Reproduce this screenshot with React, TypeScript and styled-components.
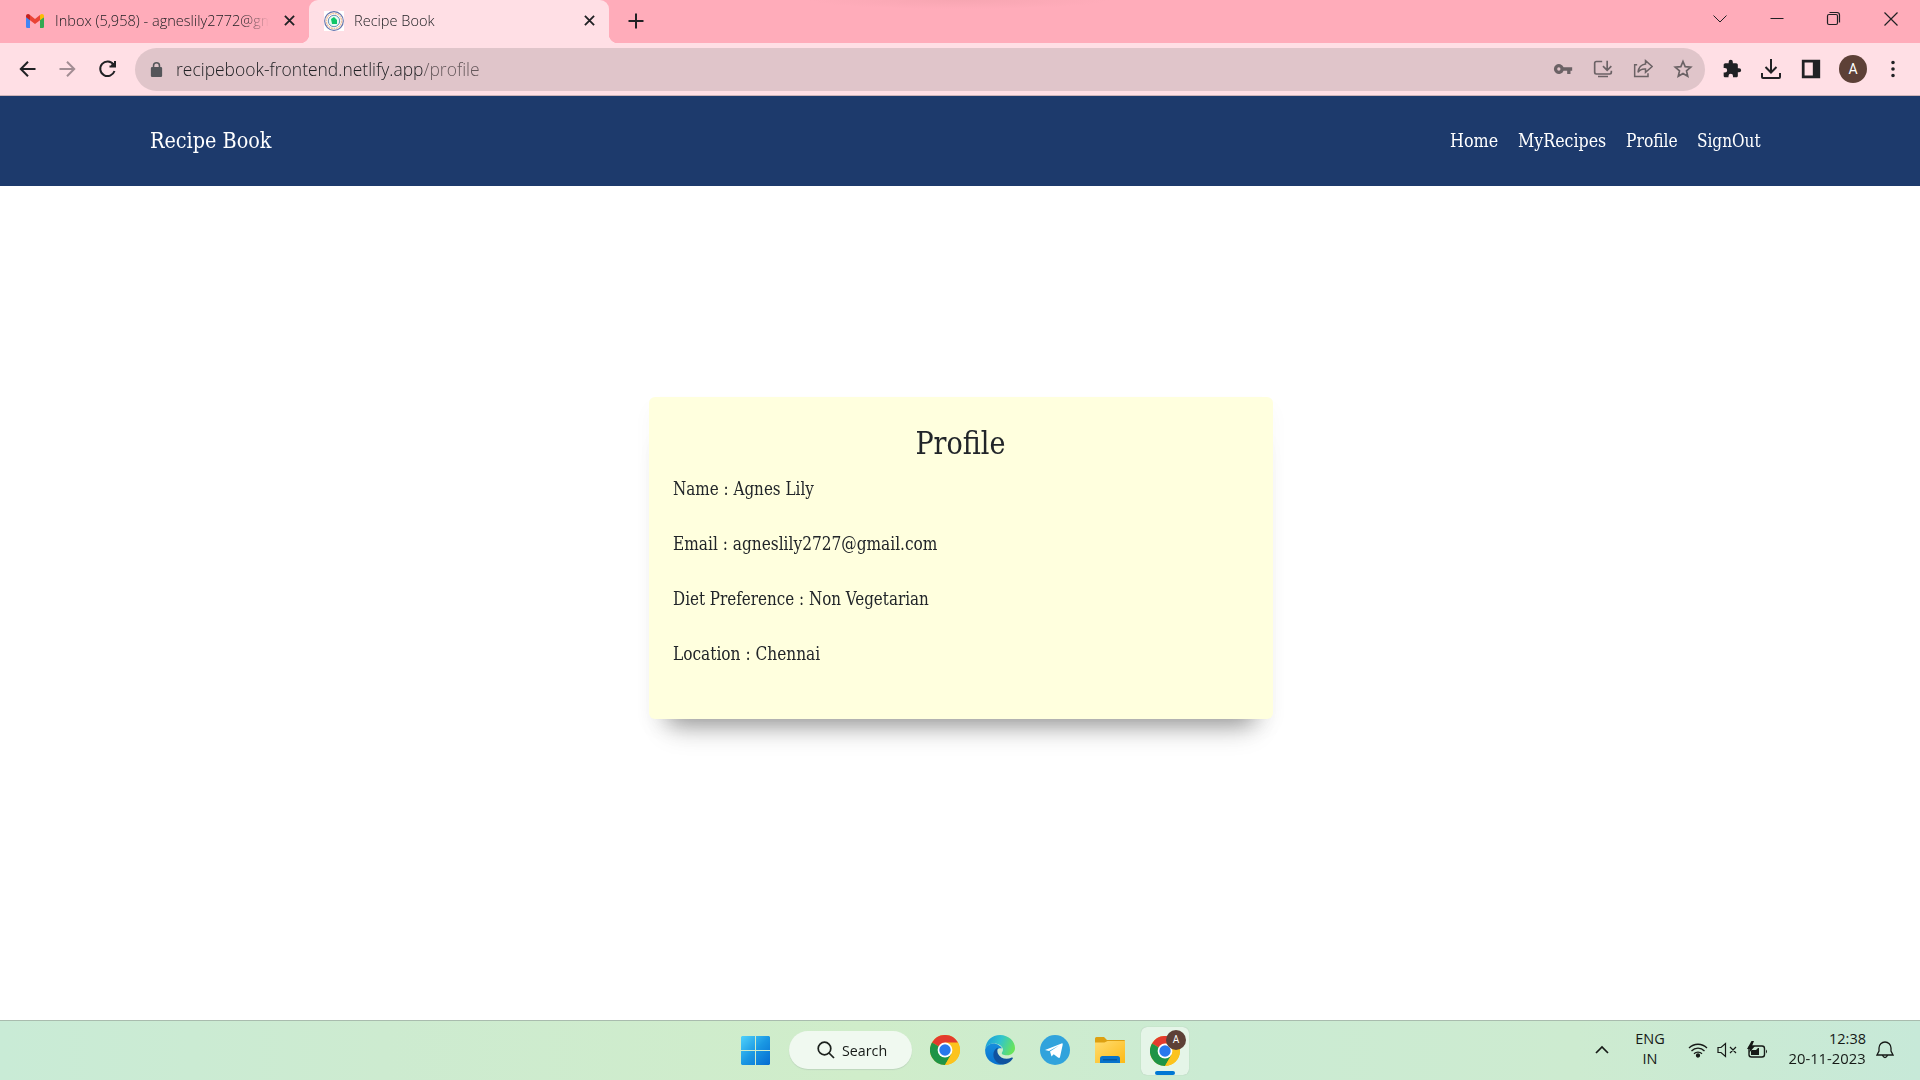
import React from "react";
import styled, { createGlobalStyle } from "styled-components";

const Global = createGlobalStyle`
  *{box-sizing:border-box}
  html,body{margin:0;padding:0;background:#fff;overflow:hidden}
  svg{display:block;flex:none}
`;
const ui = `"Open Sans","Noto Sans",sans-serif`;
const serif = `"DejaVu Serif Condensed","DejaVu Serif",serif`;

const Screen = styled.div`
  width:1920px;height:1080px;display:flex;flex-direction:column;font-family:${ui};overflow:hidden;
`;

const Squeeze = styled.span<{ $k: number; $from?: string }>`
  display:inline-block;white-space:nowrap;transform:scaleX(${p => p.$k});transform-origin:${p => p.$from || "left"} center;
`;

const TabStrip = styled.div`
  height:43px;background:radial-gradient(ellipse 150px 9px at 960px 0,#f7a6b2,#ffacba);display:flex;color:#202124;flex:none;
`;
const Tab = styled.div<{ $active?: boolean; $w: number; $pl: number }>`
  width:${p => p.$w}px;height:43px;padding:0 14px 2px ${p => p.$pl}px;display:flex;align-items:center;
  background:${p => p.$active ? "#ffdfe5" : "transparent"};border-radius:9px 9px 0 0;
  position:relative;
  &::before,&::after{content:"";display:${p => p.$active ? "block" : "none"};position:absolute;bottom:0;width:9px;height:9px}
  &::before{left:-9px;background:radial-gradient(circle at 0 0,transparent 9px,#ffdfe5 9.5px)}
  &::after{right:-9px;background:radial-gradient(circle at 100% 0,transparent 9px,#ffdfe5 9.5px)}
`;
const TabTitle = styled.div<{ $fade?: boolean; $ml: number }>`
  margin-left:${p => p.$ml}px;flex:1;overflow:hidden;white-space:nowrap;font-size:15px;line-height:22px;padding-bottom:2px;font-weight:300;
  mask-image:${p => p.$fade ? "linear-gradient(90deg,#000 188px,transparent 214px)" : "none"};
`;
const WindowControls = styled.div`
  margin-left:auto;display:flex;align-items:flex-start;padding:9px 19px 0 0;gap:37px;
`;
const NewTab = styled.div`padding:12px 0 0 18px;`;

const Toolbar = styled.div`
  height:53px;background:#ffdfe5;border-bottom:1px solid #cdb4b9;display:flex;align-items:center;padding:0 17px;flex:none;
`;
const NavButtons = styled.div`display:flex;gap:20px;width:118px;`;
const AddressBar = styled.div`
  width:1570px;height:43px;border-radius:22px;background:#e0c5ca;display:flex;align-items:center;padding:0 12px 0 14px;
`;
const Url = styled.div`
  margin-left:12px;flex:1;font-size:18px;line-height:26px;color:#202124;font-weight:300;
  em{font-style:normal;color:#66595c}
`;
const BarIcons = styled.div`display:flex;gap:20px;`;
const Extensions = styled.div`display:flex;align-items:center;gap:17px;margin-left:17px;`;
const Avatar = styled.div<{ $s: number }>`
  width:${p => p.$s}px;height:${p => p.$s}px;border-radius:50%;background:#5d4037;color:#fff;
  display:flex;align-items:center;justify-content:center;font:${p => p.$s / 2}px Roboto,sans-serif;
`;

const Header = styled.header`
  height:90px;background:#1d3a6c;color:#fff;display:flex;align-items:center;padding:0 159px 0 150px;flex:none;font-family:${serif};
`;
const Brand = styled.div`width:180px;font-size:22.5px;line-height:30px;padding-bottom:2px;`;
const Menu = styled.nav`margin-left:auto;display:flex;gap:19px;font-size:18px;line-height:26px;`;
const MenuItem = styled.a<{ $w: number }>`width:${p => p.$w}px;`;

const Page = styled.main`
  flex:1;background:#fff;display:flex;justify-content:center;align-items:flex-start;padding:211px 0 0 1px;
`;
const Card = styled.section`
  width:624px;height:322px;border-radius:6px;background:#ffffde;color:#212529;padding:24px;font-family:${serif};
  box-shadow:rgba(0,0,0,.25) 0 25px 20px -20px,rgba(0,0,0,.2) 0 28px 28px -20px,rgba(0,0,0,.03) 0 10px 20px;
`;
const Title = styled.h2`margin:0 0 11px;text-align:center;font-weight:400;font-size:31px;line-height:44px;`;
const Field = styled.p`margin:0 0 29px;font-size:18px;line-height:26px;`;

const Taskbar = styled.footer`
  height:60px;border-top:1px solid #a9bcae;flex:none;display:grid;grid-template-columns:737px 1fr auto;color:#161a17;
  background:linear-gradient(90deg,#c9ebd6 0,#cdebd0 20%,#d0edca 45%,#cbebd3 63%,#cdebd0 82%,#c7e9d8 100%);
`;
const Apps = styled.div`grid-column:2;display:flex;align-items:center;padding-left:4px;`;
const SearchBox = styled.div`
  width:123px;height:38px;border-radius:19px;background:#f0f9f0;box-shadow:0 1px 1px #bdd6bd;margin:0 18px 1px 19px;
  display:flex;align-items:center;padding-left:28px;gap:7px;font-size:15px;
`;
const AppIcon = styled.div`margin:0 25px 1px 0;`;
const ActiveApp = styled.div`
  width:48px;height:48px;margin-left:-9px;border-radius:6px;background:#e5f5e8;box-shadow:0 0 1px #9eb7a5;position:relative;
  padding:9px;
  &::after{content:"";position:absolute;left:14px;bottom:0;width:20px;height:4px;border-radius:2px;background:#0078d4}
`;
const Badge = styled.div`position:absolute;left:25px;top:3px;`;
const Tray = styled.div`display:flex;align-items:center;padding:0 26px 2px 0;font-size:14.5px;line-height:20px;`;
const Language = styled.div`width:30px;margin:0 23px 0 26px;text-align:center;padding-bottom:1px;`;
const Status = styled.div`display:flex;align-items:center;gap:9px;`;
const Clock = styled.div`width:80px;margin:0 10px 0 18px;display:flex;flex-direction:column;align-items:flex-end;white-space:nowrap;padding-bottom:1px;`;

const Close = ({ s = 11, w = 2 }: { s?: number; w?: number }) => (
  <svg width={s} height={s} viewBox="0 0 12 12"><path d="M1 1l10 10M11 1L1 11" stroke="#202124" strokeWidth={w} /></svg>
);
const Gmail = () => (
  <svg width="18" height="14" viewBox="0 0 18 14"><path d="M0 3v9.5Q0 14 1.3 14H4V5z" fill="#4285f4" /><path d="M14 5v9h2.7Q18 14 18 12.5V3z" fill="#34a853" /><path d="M4 1l5 4 5-4v5.2L9 10 4 6.2z" fill="#ea4335" /><path d="M0 2.3C0 .2 2.3-.7 4 1v5.2L0 3.2z" fill="#c5221f" /><path d="M14 1c1.700-1.700 4-.8 4 1.300v.9l-4 3z" fill="#fbbc04" /></svg>
);
const SiteIcon = () => (
  <svg width="20" height="20" viewBox="0 0 20 20"><path fill="#fff" d="M0 0h20v20H0z" /><circle cx="10" cy="10" r="9.300" fill="#fff" stroke="#6573ad" strokeWidth="1.200" /><circle cx="10" cy="10" r="7.600" fill="none" stroke="#f2c6a3" strokeWidth="1.500" strokeDasharray="2 .6" /><circle cx="10" cy="10" r="5.700" fill="#e9fbf2" stroke="#6b91b8" strokeWidth="1" /><path d="M7 8l3-2 3 3v4H8z" fill="#12c668" /></svg>
);
const Chrome = () => (
  <svg width="30" height="30" viewBox="0 0 30 30"><circle cx="15" cy="15" r="15" fill="#fbbc04" /><path d="M15 15L2 7.500A15 15 0 0 1 28 7.500z" fill="#e33b2e" /><path d="M2 7.500A15 15 0 0 0 15 30l6.500-11.250L15 15z" fill="#1e9446" /><path d="M15 7.500h13l.4 1A15 15 0 0 1 15 30l6.500-11.250z" fill="#fcc31d" /><circle cx="15" cy="15" r="7.400" fill="#fff" /><circle cx="15" cy="15" r="5.700" fill="#2878ed" /></svg>
);
const Edge = () => (
  <svg width="30" height="30" viewBox="0 0 30 30">
    <defs><linearGradient id="ea" x1="0" x2="1" y1=".2" y2=".5"><stop stopColor="#189bdc" /><stop offset=".5" stopColor="#32c5cb" /><stop offset="1" stopColor="#68e45a" /></linearGradient><linearGradient id="eb" x1="0" x2="0" y1="0" y2="1"><stop stopColor="#168ddd" /><stop offset="1" stopColor="#0872cf" /></linearGradient></defs>
    <path d="M.2 14C1 5.500 7 0 15 0c9 0 15 6.600 15 13 0 4.600-3.800 7.300-8 7.300-4 0-6-1.400-5-2.800 1.700-2 1.300-5-1.500-7C10 6.800 2.500 8.500.2 14z" fill="url(#ea)" />
    <path d="M.2 14C2.500 8.500 9 7 13.500 10c2 1.200 3.200 2.500 3.500 3.500-7-1.500-9 8-3 12.500 2 2 5 2.800 7 2.500C12 32.500-1 26.500.2 14z" fill="url(#eb)" />
    <path d="M13 12.400c-6.500 3-6.200 12.200.8 16.100 5 2.200 11-.2 14-5.100.3-.7-.3-1.200-1-.8-5.500 2.700-11.800.7-13.800-3.800-1-2.300-.7-4.600 0-6.400z" fill="#10539f" />
  </svg>
);
const Telegram = () => (
  <svg width="30" height="30" viewBox="0 0 30 30"><circle cx="15" cy="15" r="15" fill="#31a3dc" /><path d="M5 15L21.500 8.400q1.500-.4 1.200 1.300L20 22c-.3 1-1 1.200-2 .5l-4.300-3.200-2.200 2.200-1.500-5 9-6L9 16z" fill="#fff" /></svg>
);
const Folder = () => (
  <svg width="30" height="27" viewBox="0 0 30 27"><path d="M0 6V1.500Q0 0 1.500 0H9l3 3h17q1 0 1 1v4H0z" fill="#dda011" /><defs><linearGradient id="fd" x2="1" y2="1"><stop stopColor="#ffdc70" /><stop offset="1" stopColor="#fdba16" /></linearGradient></defs><path d="M0 5.500h9.500L12.500 4H30v22H0z" fill="url(#fd)" /><path d="M5 26v-4.500Q5 19 7.500 19h15q2.500 0 2.500 2.500V26z" fill="#0873cb" /><path d="M8 22.800h14" stroke="#054d8d" /></svg>
);
const Windows = () => (
  <svg width="29" height="29" viewBox="0 0 29 29"><defs><linearGradient id="wn" x2="1" y2="1"><stop stopColor="#50d2fb" /><stop offset=".5" stopColor="#1a98e3" /><stop offset="1" stopColor="#046bd0" /></linearGradient></defs><path d="M1 0h13v14H0V1zM15 0h13l1 1v13H15zM0 15h14v14H1l-1-1zM15 15h14v13l-1 1H15z" fill="url(#wn)" /></svg>
);
const Glyph = ({ d, s = 22, c = "#6b6265", fill, w = 2, vb = 24 }: { d: string; s?: number; c?: string; fill?: boolean; w?: number; vb?: number }) => (
  <svg width={s} height={s} viewBox={`0 0 ${vb} ${vb}`} fill={fill ? c : "none"} stroke={fill ? "none" : c} strokeWidth={w} fillRule="evenodd"><path d={d} /></svg>
);

const links: [string, number, number][] = [["Home", 49, 0.985], ["MyRecipes", 89, 0.98], ["Profile", 52, 0.96], ["SignOut", 64, 0.945]];
const fields: [string, number][] = [
  ["Name : Agnes Lily", 0.937],
  ["Email : agneslily2727@gmail.com", 0.95],
  ["Diet Preference : Non Vegetarian", 0.935],
  ["Location : Chennai", 0.95],
];

export default function App() {
  return (
    <Screen>
      <Global />
      <TabStrip>
        <Tab $w={309} $pl={26}>
          <Gmail />
          <TabTitle $ml={11} $fade><Squeeze $k={0.97}>Inbox (5,958) - agneslily2772@gm</Squeeze></TabTitle>
          <Close />
        </Tab>
        <Tab $active $w={300} $pl={15}>
          <SiteIcon />
          <TabTitle $ml={10}><Squeeze $k={0.97}>Recipe Book</Squeeze></TabTitle>
          <Close />
        </Tab>
        <NewTab><svg width="18" height="18" viewBox="0 0 18 18"><path d="M9 1.500v15M1.500 9h15" stroke="#202124" strokeWidth="2" /></svg></NewTab>
        <WindowControls>
          <Glyph s={20} vb={20} w={1} c="#202124" d="M3.500 6.500l6.500 6.500 6.500-6.500" />
          <Glyph s={20} vb={20} w={1} c="#202124" d="M3.500 9.500h13" />
          <Glyph s={20} vb={20} w={1.2} c="#202124" d="M6 5.500h6q1.500 0 1.500 1.500v7q0 1.500-1.500 1.500H5Q3.500 15.500 3.500 14V7Q3.500 5.500 5 5.500zM5.500 3.500H13q2.500 0 2.500 2.500v7.500" />
          <Glyph s={20} vb={20} w={1.2} c="#202124" d="M3.500 3.500l13 13M16.500 3.500l-13 13" />
        </WindowControls>
      </TabStrip>
      <Toolbar>
        <NavButtons>
          <Glyph s={20} vb={20} c="#202124" d="M18.500 10H4M11 2.800L3.800 10l7.200 7.200" />
          <Glyph s={20} vb={20} c="#a28d93" d="M2.500 10H17M10 2.800l7.200 7.200-7.200 7.200" />
          <Glyph s={20} vb={20} c="#202124" d="M16.500 5.500A7.300 7.300 0 1 0 17.500 12M18 2v5.500H12.500M17 4v2.500h-3" />
        </NavButtons>
        <AddressBar>
          <Glyph s={15} c="#55565a" fill d="M6 8V6a6 6 0 0 1 12 0v2h1q2 0 2 2v12q0 2-2 2H5q-2 0-2-2V10q0-2 2-2zm2.500 0h7V6a3.500 3.500 0 0 0-7 0z" />
          <Url><Squeeze $k={0.97}>recipebook-frontend.netlify.app<em>/profile</em></Squeeze></Url>
          <BarIcons>
            <Glyph s={20} fill d="M12.700 10A6 6 0 1 0 12.700 14H17v4h4v-4h2v-4zM7 14a2 2 0 1 1 0-4 2 2 0 0 1 0 4z" />
            <Glyph s={20} d="M11 3H4Q2 3 2 5v11q0 2 2 2h16q2 0 2-2v-2M6 21h12M17 2v11M12 8.500l5 5 5-5" />
            <Glyph s={20} w={1.8} d="M5 7H2v14h16v-4M15 2l8 7-8 7v-4q-6-.5-9 4 1-9 9-10z" />
            <Glyph s={20} w={2} d="M12 3l2.600 6.200 6.700.6-5.100 4.400 1.500 6.600L12 17.300l-5.700 3.500 1.500-6.600-5.100-4.400 6.700-.6z" />
          </BarIcons>
        </AddressBar>
        <Extensions>
          <Glyph s={20} c="#202124" fill d="M20.500 11H19V7c0-1.100-.9-2-2-2h-4V3.500a2.500 2.500 0 0 0-5 0V5H4c-1.100 0-2 .9-2 2v3.800h1.500a2.700 2.700 0 0 1 0 5.400H2V20c0 1.100.9 2 2 2h3.800v-1.500a2.700 2.700 0 0 1 5.400 0V22H17c1.100 0 2-.9 2-2v-4h1.500a2.500 2.500 0 0 0 0-5z" />
          <Glyph s={24} c="#202124" d="M12 2v13M6.500 10l5.500 5.500 5.500-5.500M3 16v4q0 1 1 1h16q1 0 1-1v-4" />
          <Glyph s={22} c="#202124" fill d="M2 2h20v20H2zm3 3v14h9V5z" />
          <Avatar $s={28}>A</Avatar>
          <Glyph s={18} c="#202124" fill d="M12 1a2.400 2.400 0 1 1 0 4.800 2.400 2.400 0 0 1 0-4.800M12 9.600a2.400 2.400 0 1 1 0 4.800 2.400 2.400 0 0 1 0-4.800M12 18.200a2.400 2.400 0 1 1 0 4.800 2.400 2.400 0 0 1 0-4.800" />
        </Extensions>
      </Toolbar>
      <Header>
        <Brand><Squeeze $k={0.95}>Recipe Book</Squeeze></Brand>
        <Menu>{links.map(([t, w, k]) => <MenuItem key={t} $w={w}><Squeeze $k={k}>{t}</Squeeze></MenuItem>)}</Menu>
      </Header>
      <Page>
        <Card>
          <Title><Squeeze $k={0.97} $from="center">Profile</Squeeze></Title>
          {fields.map(([f, k]) => <Field key={f}><Squeeze $k={k}>{f}</Squeeze></Field>)}
        </Card>
      </Page>
      <Taskbar>
        <Apps>
          <Windows />
          <SearchBox>
            <svg width="18" height="18" viewBox="0 0 18 18" fill="none" stroke="#1c211d" strokeWidth="1.700"><circle cx="7.500" cy="7.500" r="6.300" /><path d="M12 12l5 5" /></svg>
            <Squeeze $k={0.95}>Search</Squeeze>
          </SearchBox>
          <AppIcon><Chrome /></AppIcon>
          <AppIcon><Edge /></AppIcon>
          <AppIcon><Telegram /></AppIcon>
          <AppIcon><Folder /></AppIcon>
          <ActiveApp><Chrome /><Badge><Avatar $s={20}>A</Avatar></Badge></ActiveApp>
        </Apps>
        <Tray>
          <svg width="14" height="9" viewBox="0 0 14 9"><path d="M1 8l6-6 6 6" fill="none" stroke="#161a17" strokeWidth="1.700" /></svg>
          <Language>ENG<br />IN</Language>
          <Status>
            <svg width="20" height="16" viewBox="0 0 20 16" fill="none" stroke="#161a17" strokeWidth="1.300"><path d="M1 6a12.700 12.700 0 0 1 18 0M3.500 9a9 9 0 0 1 13 0M6 11.700a5.700 5.700 0 0 1 8 0" /><circle cx="10" cy="13.500" r="1.500" fill="#161a17" /></svg>
            <svg width="21" height="16" viewBox="0 0 21 16" fill="none" stroke="#161a17" strokeWidth="1.200"><path d="M1 5.500h3L8.500 1.500v13L4 10.500H1zM13 5l6 6M19 5l-6 6" /></svg>
            <svg width="21" height="18" viewBox="0 0 21 18"><rect x="2" y="5" width="15.500" height="11" rx="2.500" fill="none" stroke="#161a17" strokeWidth="1.400" /><path d="M19 8.500q2 2 0 4zM4 14V9h5l2-2h1v7zM4.500 0L0 8h3L2 12l6-7H5l2-5z" fill="#161a17" /></svg>
          </Status>
          <Clock><Squeeze $k={1} $from="right">12:38</Squeeze><Squeeze $k={1.02} $from="right">20-11-2023</Squeeze></Clock>
          <svg width="18" height="19" viewBox="0 0 18 19" fill="none" stroke="#161a17" strokeWidth="1.300"><path d="M3 8a6 6 0 0 1 12 0v3l2 4H1l2-4zM6.500 15.500q2.500 4 5 0" /></svg>
        </Tray>
      </Taskbar>
    </Screen>
  );
}
